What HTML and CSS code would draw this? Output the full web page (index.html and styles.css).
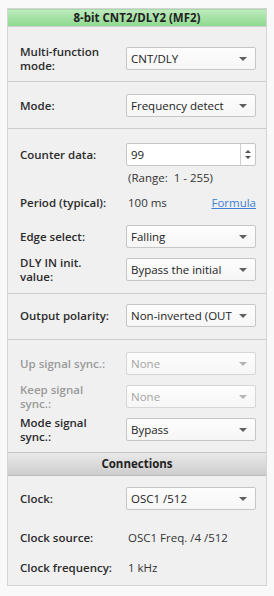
FILE: index.html
```html
<!DOCTYPE html>
<html>
<head>
    <title>8-bit CNT2/DLY2 (MF2)</title>
    <link rel="stylesheet" href="styles.css">
</head>
<body>
    <div class="panel">
        <div class="title">8-bit CNT2/DLY2 (MF2)</div>

        <div class="section s1">
            <div class="row">
                <label class="lbl">Multi-function<br>mode:</label>
                <div class="select"><span class="val">CNT/DLY</span><span class="arrow"></span></div>
            </div>
        </div>

        <div class="section s2">
            <div class="row">
                <label class="lbl">Mode:</label>
                <div class="select"><span class="val">Frequency detect</span><span class="arrow"></span></div>
            </div>
        </div>

        <div class="section s3">
            <div class="row">
                <label class="lbl">Counter data:</label>
                <div class="spin">
                    <span class="val">99</span>
                    <span class="spin-btn">
                        <span class="up"></span>
                        <span class="down"></span>
                    </span>
                </div>
            </div>
            <div class="row text-row range-row">
                <span></span>
                <span class="text">(Range:&nbsp; 1 - 255)</span>
            </div>
            <div class="row text-row period-row">
                <label class="lbl">Period (typical):</label>
                <span class="text split"><span>100 ms</span><a href="#" class="link">Formula</a></span>
            </div>
            <div class="row edge-row">
                <label class="lbl">Edge select:</label>
                <div class="select"><span class="val">Falling</span><span class="arrow"></span></div>
            </div>
            <div class="row gap">
                <label class="lbl">DLY IN init.<br>value:</label>
                <div class="select"><span class="val">Bypass the initial</span><span class="arrow"></span></div>
            </div>
        </div>

        <div class="section s4">
            <div class="row">
                <label class="lbl">Output polarity:</label>
                <div class="select"><span class="val">Non-inverted (OUT</span><span class="arrow"></span></div>
            </div>
        </div>

        <div class="section s5">
            <div class="row">
                <label class="lbl disabled">Up signal sync.:</label>
                <div class="select off"><span class="val">None</span><span class="arrow"></span></div>
            </div>
            <div class="row gap">
                <label class="lbl disabled">Keep signal<br>sync.:</label>
                <div class="select off"><span class="val">None</span><span class="arrow"></span></div>
            </div>
            <div class="row gap">
                <label class="lbl">Mode signal<br>sync.:</label>
                <div class="select"><span class="val">Bypass</span><span class="arrow"></span></div>
            </div>
        </div>

        <div class="subtitle">Connections</div>

        <div class="section s6">
            <div class="row">
                <label class="lbl">Clock:</label>
                <div class="select"><span class="val">OSC1 /512</span><span class="arrow"></span></div>
            </div>
            <div class="row text-row src-row">
                <label class="lbl">Clock source:</label>
                <span class="text">OSC1 Freq. /4 /512</span>
            </div>
            <div class="row text-row freq-row">
                <label class="lbl">Clock frequency:</label>
                <span class="text">1 kHz</span>
            </div>
        </div>
    </div>
</body>
</html>
```

FILE: styles.css
```css
body {
    margin: 0;
    background-color: #f9f9f9;
    font-family: "Open Sans", "DejaVu Sans", sans-serif;
    font-size: 11.5px;
    color: #333;
}
.panel {
    margin: 8px 0 0 7px;
    width: 260px;
    height: 578px;
    border: 1px solid #d4d4d4;
    background-color: #f0f0f0;
    padding: 0;
    box-sizing: border-box;
}
.title {
    height: 16px;
    line-height: 16px;
    text-align: center;
    font-weight: 700;
    color: #222;
    background: linear-gradient(#bdeabd, #8fd98f);
    border-top: 1px solid #a6dca6;
    border-bottom: 1px solid #cfcfcf;
}
.subtitle {
    height: 22px;
    line-height: 22px;
    text-align: center;
    font-weight: 700;
    color: #222;
    background: linear-gradient(#e9e9e9, #cdcdcd);
    border-top: 1px solid #c4c4c4;
    border-bottom: 1px solid #bdbdbd;
}
.section {
    padding: 0 10px 0 12px;
    border-bottom: 1px solid #cdcdcd;
}
.s1 { padding-top: 20px; padding-bottom: 11px; }
.s2 { padding-top: 12px; padding-bottom: 11px; }
.s3 { padding-top: 14px; padding-bottom: 12px; }
.s4 { padding-top: 10px; padding-bottom: 12px; }
.s5 { padding-top: 12px; padding-bottom: 11px; border-bottom: none; }
.s6 { padding-top: 11px; border-bottom: none; }
.row {
    display: grid;
    grid-template-columns: 106px 130px;
    grid-template-rows: 23px;
    align-items: center;
}
.row.gap { margin-top: 10px; }
.lbl {
    font-weight: 600;
    line-height: 14px;
    color: #2b2b2b;
}
.lbl.disabled { color: #9a9a9a; }
.select, .spin {
    height: 23px;
    box-sizing: border-box;
    border: 1px solid #c6c6c6;
    border-radius: 2px;
    background: linear-gradient(#fdfdfd, #f6f6f6);
    display: flex;
    align-items: center;
    padding-left: 4px;
    color: #222;
}
.select .val {
    flex: 1;
    white-space: nowrap;
    overflow: hidden;
}
.select .arrow {
    width: 0;
    height: 0;
    border-left: 4px solid transparent;
    border-right: 4px solid transparent;
    border-top: 4px solid #606060;
    margin: 0 8px 0 3px;
}
.select.off { color: #a4a4a4; border-color: #d6d6d6; }
.select.off .arrow { border-top-color: #b4b4b4; }
.spin {
    background: #fff;
    padding-right: 0;
}
.spin .val { flex: 1; }
.spin-btn {
    width: 14px;
    height: 100%;
    border-left: 1px solid #d0d0d0;
    display: flex;
    flex-direction: column;
    align-items: center;
    justify-content: center;
    gap: 3px;
}
.spin-btn .up {
    border-left: 3px solid transparent;
    border-right: 3px solid transparent;
    border-bottom: 3px solid #555;
}
.spin-btn .down {
    border-left: 3px solid transparent;
    border-right: 3px solid transparent;
    border-top: 3px solid #555;
}
.text-row { grid-template-rows: 14px; }
.text {
    padding-left: 2px;
    color: #333;
    line-height: 14px;
}
.split {
    display: flex;
    justify-content: space-between;
}
.link {
    color: #3c80d4;
    text-decoration: underline;
}
.range-row { margin-top: 5px; }
.period-row { margin-top: 11px; }
.edge-row { margin-top: 15px; }
.src-row { margin-top: 21px; }
.freq-row { margin-top: 16px; }
```
